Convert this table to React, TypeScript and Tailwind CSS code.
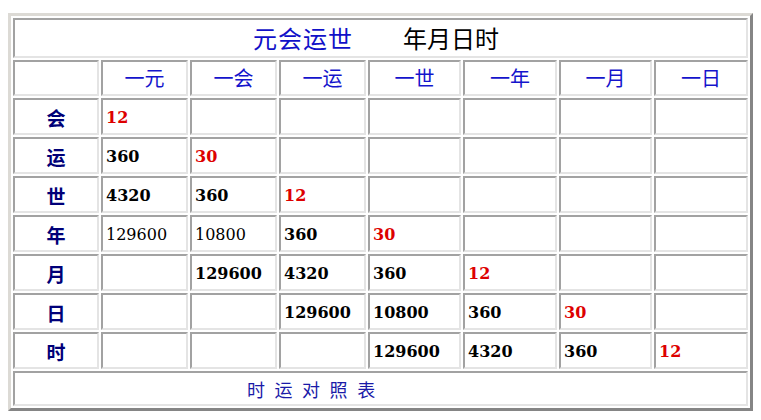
import React from "react";

type Val = { t: string; red?: boolean; light?: boolean } | null;

const rows: { label: string; cells: Val[] }[] = [
  { label: "会", cells: [{ t: "12", red: true }, null, null, null, null, null, null] },
  { label: "运", cells: [{ t: "360" }, { t: "30", red: true }, null, null, null, null, null] },
  { label: "世", cells: [{ t: "4320" }, { t: "360" }, { t: "12", red: true }, null, null, null, null] },
  {
    label: "年",
    cells: [{ t: "129600", light: true }, { t: "10800", light: true }, { t: "360" }, { t: "30", red: true }, null, null, null],
  },
  { label: "月", cells: [null, { t: "129600" }, { t: "4320" }, { t: "360" }, { t: "12", red: true }, null, null] },
  { label: "日", cells: [null, null, { t: "129600" }, { t: "10800" }, { t: "360" }, { t: "30", red: true }, null] },
  { label: "时", cells: [null, null, null, { t: "129600" }, { t: "4320" }, { t: "360" }, { t: "12", red: true }] },
];

const headers = ["一元", "一会", "一运", "一世", "一年", "一月", "一日"];

const cellBorder =
  "border-2 border-t-[#a2a2a2] border-l-[#a2a2a2] border-b-[#e4e4e4] border-r-[#e4e4e4] bg-white";

const cjk = "font-['Noto_Sans_CJK_SC',sans-serif]";
const serif = "font-['DejaVu_Serif',serif]";

export default function App() {
  return (
    <div className="w-[761px] h-[420px] bg-white overflow-hidden pt-[13px] pl-[8px]">
      <div className="w-[745px] border-[3px] border-t-[#dcdad5] border-l-[#dcdad5] border-b-[#858585] border-r-[#858585] p-[2px] bg-white">
        <div className="grid grid-cols-[86px_87px_87px_87px_93px_94px_93px_94px] grid-rows-[40px_36px_repeat(7,37px)_35px] gap-[2px]">
          <div className={`${cellBorder} col-span-8 flex items-center pl-[238px] ${cjk} text-[24px] leading-none`}>
            <span className="text-[#1010c8] tracking-[1px]">元会运世</span>
            <span className="text-black ml-[50px]">年月日时</span>
          </div>

          <div className={cellBorder}></div>
          {headers.map((h) => (
            <div
              key={h}
              className={`${cellBorder} flex items-center justify-center ${cjk} text-[20px] leading-none text-[#1414cc]`}
            >
              {h}
            </div>
          ))}

          {rows.map((r) => (
            <React.Fragment key={r.label}>
              <div
                className={`${cellBorder} flex items-center justify-center pt-[1px] ${cjk} text-[19px] font-bold leading-none text-[#000078]`}
              >
                {r.label}
              </div>
              {r.cells.map((c, i) => (
                <div
                  key={i}
                  className={`${cellBorder} flex items-center pl-[3px] pt-[2px] ${serif} text-[16px] leading-none ${
                    c && c.red ? "text-[#dd0000]" : "text-black"
                  } ${c && c.light ? "font-normal" : "font-bold"}`}
                >
                  {c ? c.t : ""}
                </div>
              ))}
            </React.Fragment>
          ))}

          <div
            className={`${cellBorder} col-span-8 flex items-center pl-[232px] ${cjk} text-[18px] leading-none text-[#1a1aa8] [word-spacing:5.5px]`}
          >
            时 运 对 照 表
          </div>
        </div>
      </div>
    </div>
  );
}
